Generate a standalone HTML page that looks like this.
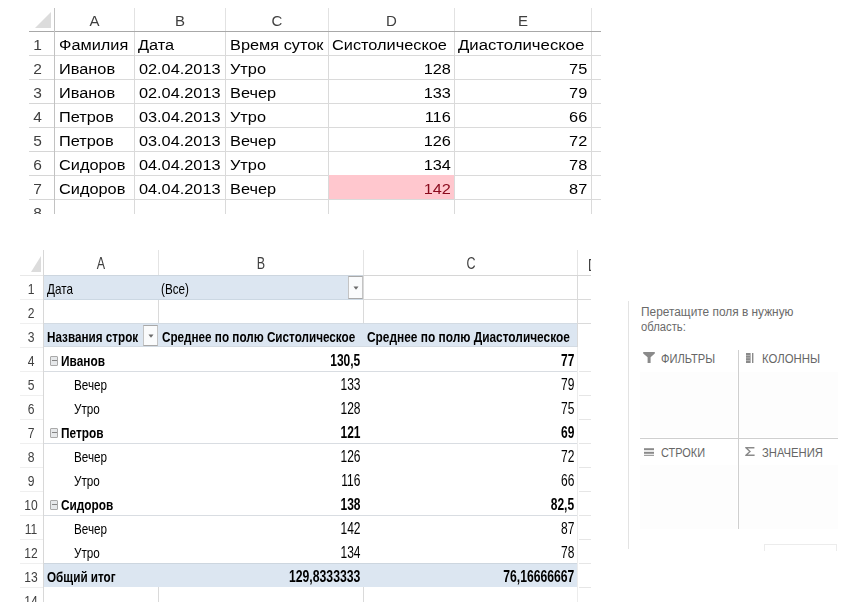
<!DOCTYPE html><html><head><meta charset="utf-8"><style>html,body{margin:0;padding:0;background:#fff;width:854px;height:602px;overflow:hidden;position:relative;font-family:"Liberation Sans", sans-serif}</style></head><body><div style="position:absolute;left:0;top:0;width:854px;height:602px;background:#fff;filter:blur(0.5px)">
<div style="position:absolute;left:134px;top:8px;width:1px;height:23px;background:#e2e2e2"></div>
<div style="position:absolute;left:134px;top:31px;width:1px;height:183px;background:#dadada"></div>
<div style="position:absolute;left:225px;top:8px;width:1px;height:23px;background:#e2e2e2"></div>
<div style="position:absolute;left:225px;top:31px;width:1px;height:183px;background:#dadada"></div>
<div style="position:absolute;left:328px;top:8px;width:1px;height:23px;background:#e2e2e2"></div>
<div style="position:absolute;left:328px;top:31px;width:1px;height:183px;background:#dadada"></div>
<div style="position:absolute;left:454px;top:8px;width:1px;height:23px;background:#e2e2e2"></div>
<div style="position:absolute;left:454px;top:31px;width:1px;height:183px;background:#dadada"></div>
<div style="position:absolute;left:591px;top:8px;width:1px;height:23px;background:#e2e2e2"></div>
<div style="position:absolute;left:591px;top:31px;width:1px;height:183px;background:#dadada"></div>
<div style="position:absolute;left:29px;top:55px;width:25px;height:1px;background:#d6d6d6"></div>
<div style="position:absolute;left:54px;top:55px;width:547px;height:1px;background:#dadada"></div>
<div style="position:absolute;left:29px;top:79px;width:25px;height:1px;background:#d6d6d6"></div>
<div style="position:absolute;left:54px;top:79px;width:547px;height:1px;background:#dadada"></div>
<div style="position:absolute;left:29px;top:103px;width:25px;height:1px;background:#d6d6d6"></div>
<div style="position:absolute;left:54px;top:103px;width:547px;height:1px;background:#dadada"></div>
<div style="position:absolute;left:29px;top:127px;width:25px;height:1px;background:#d6d6d6"></div>
<div style="position:absolute;left:54px;top:127px;width:547px;height:1px;background:#dadada"></div>
<div style="position:absolute;left:29px;top:151px;width:25px;height:1px;background:#d6d6d6"></div>
<div style="position:absolute;left:54px;top:151px;width:547px;height:1px;background:#dadada"></div>
<div style="position:absolute;left:29px;top:175px;width:25px;height:1px;background:#d6d6d6"></div>
<div style="position:absolute;left:54px;top:175px;width:547px;height:1px;background:#dadada"></div>
<div style="position:absolute;left:29px;top:199px;width:25px;height:1px;background:#d6d6d6"></div>
<div style="position:absolute;left:54px;top:199px;width:547px;height:1px;background:#dadada"></div>
<div style="position:absolute;left:329px;top:175px;width:125px;height:24px;background:#ffc7ce;"></div>
<div style="position:absolute;left:29px;top:31px;width:572px;height:1px;background:#a8a8a8"></div>
<div style="position:absolute;left:54px;top:8px;width:1px;height:206px;background:#c2c2c2"></div>
<svg style="position:absolute;left:33px;top:10px" width="20" height="20"><polygon points="18,2 18,18 2,18" fill="#dcdcdc"/></svg>
<div style="position:absolute;left:-105.5px;width:400px;text-align:center;top:12.70px;font-size:15px;line-height:15px;font-weight:normal;color:#3f3f3f;white-space:pre;transform:scaleX(1.0);transform-origin:center 0;">A</div>
<div style="position:absolute;left:-20.0px;width:400px;text-align:center;top:12.70px;font-size:15px;line-height:15px;font-weight:normal;color:#3f3f3f;white-space:pre;transform:scaleX(1.0);transform-origin:center 0;">B</div>
<div style="position:absolute;left:77.0px;width:400px;text-align:center;top:12.70px;font-size:15px;line-height:15px;font-weight:normal;color:#3f3f3f;white-space:pre;transform:scaleX(1.0);transform-origin:center 0;">C</div>
<div style="position:absolute;left:191.5px;width:400px;text-align:center;top:12.70px;font-size:15px;line-height:15px;font-weight:normal;color:#3f3f3f;white-space:pre;transform:scaleX(1.0);transform-origin:center 0;">D</div>
<div style="position:absolute;left:323.0px;width:400px;text-align:center;top:12.70px;font-size:15px;line-height:15px;font-weight:normal;color:#3f3f3f;white-space:pre;transform:scaleX(1.0);transform-origin:center 0;">E</div>
<div style="position:absolute;left:-162.4px;width:400px;text-align:center;top:37.08px;font-size:15.5px;line-height:15.5px;font-weight:normal;color:#3f3f3f;white-space:pre;transform:scaleX(1.0);transform-origin:center 0;">1</div>
<div style="position:absolute;left:-162.4px;width:400px;text-align:center;top:61.08px;font-size:15.5px;line-height:15.5px;font-weight:normal;color:#3f3f3f;white-space:pre;transform:scaleX(1.0);transform-origin:center 0;">2</div>
<div style="position:absolute;left:-162.4px;width:400px;text-align:center;top:85.08px;font-size:15.5px;line-height:15.5px;font-weight:normal;color:#3f3f3f;white-space:pre;transform:scaleX(1.0);transform-origin:center 0;">3</div>
<div style="position:absolute;left:-162.4px;width:400px;text-align:center;top:109.08px;font-size:15.5px;line-height:15.5px;font-weight:normal;color:#3f3f3f;white-space:pre;transform:scaleX(1.0);transform-origin:center 0;">4</div>
<div style="position:absolute;left:-162.4px;width:400px;text-align:center;top:133.08px;font-size:15.5px;line-height:15.5px;font-weight:normal;color:#3f3f3f;white-space:pre;transform:scaleX(1.0);transform-origin:center 0;">5</div>
<div style="position:absolute;left:-162.4px;width:400px;text-align:center;top:157.08px;font-size:15.5px;line-height:15.5px;font-weight:normal;color:#3f3f3f;white-space:pre;transform:scaleX(1.0);transform-origin:center 0;">6</div>
<div style="position:absolute;left:-162.4px;width:400px;text-align:center;top:181.08px;font-size:15.5px;line-height:15.5px;font-weight:normal;color:#3f3f3f;white-space:pre;transform:scaleX(1.0);transform-origin:center 0;">7</div>
<div style="position:absolute;left:-162.4px;width:400px;text-align:center;top:205.08px;font-size:15.5px;line-height:15.5px;font-weight:normal;color:#3f3f3f;white-space:pre;transform:scaleX(1.0);transform-origin:center 0;">8</div>
<div style="position:absolute;left:58.8px;top:36.98px;font-size:15.5px;line-height:15.5px;font-weight:normal;color:#000;white-space:pre;transform:scaleX(1.053);transform-origin:left 0;">Фамилия</div>
<div style="position:absolute;left:138.2px;top:36.98px;font-size:15.5px;line-height:15.5px;font-weight:normal;color:#000;white-space:pre;transform:scaleX(1.053);transform-origin:left 0;">Дата</div>
<div style="position:absolute;left:230px;top:36.98px;font-size:15.5px;line-height:15.5px;font-weight:normal;color:#000;white-space:pre;transform:scaleX(1.053);transform-origin:left 0;">Время суток</div>
<div style="position:absolute;left:332px;top:36.98px;font-size:15.5px;line-height:15.5px;font-weight:normal;color:#000;white-space:pre;transform:scaleX(1.053);transform-origin:left 0;">Систолическое</div>
<div style="position:absolute;left:458.4px;top:36.98px;font-size:15.5px;line-height:15.5px;font-weight:normal;color:#000;white-space:pre;transform:scaleX(1.0793249999999999);transform-origin:left 0;">Диастолическое</div>
<div style="position:absolute;left:58.8px;top:60.98px;font-size:15.5px;line-height:15.5px;font-weight:normal;color:#000;white-space:pre;transform:scaleX(1.053);transform-origin:left 0;">Иванов</div>
<div style="position:absolute;right:633px;top:60.98px;font-size:15.5px;line-height:15.5px;font-weight:normal;color:#000;white-space:pre;transform:scaleX(1.053);transform-origin:right 0;">02.04.2013</div>
<div style="position:absolute;left:229.5px;top:60.98px;font-size:15.5px;line-height:15.5px;font-weight:normal;color:#000;white-space:pre;transform:scaleX(1.053);transform-origin:left 0;">Утро</div>
<div style="position:absolute;right:403.5px;top:60.98px;font-size:15.5px;line-height:15.5px;font-weight:normal;color:#000;white-space:pre;transform:scaleX(1.053);transform-origin:right 0;">128</div>
<div style="position:absolute;right:266.5px;top:60.98px;font-size:15.5px;line-height:15.5px;font-weight:normal;color:#000;white-space:pre;transform:scaleX(1.053);transform-origin:right 0;">75</div>
<div style="position:absolute;left:58.8px;top:84.98px;font-size:15.5px;line-height:15.5px;font-weight:normal;color:#000;white-space:pre;transform:scaleX(1.053);transform-origin:left 0;">Иванов</div>
<div style="position:absolute;right:633px;top:84.98px;font-size:15.5px;line-height:15.5px;font-weight:normal;color:#000;white-space:pre;transform:scaleX(1.053);transform-origin:right 0;">02.04.2013</div>
<div style="position:absolute;left:229.5px;top:84.98px;font-size:15.5px;line-height:15.5px;font-weight:normal;color:#000;white-space:pre;transform:scaleX(1.053);transform-origin:left 0;">Вечер</div>
<div style="position:absolute;right:403.5px;top:84.98px;font-size:15.5px;line-height:15.5px;font-weight:normal;color:#000;white-space:pre;transform:scaleX(1.053);transform-origin:right 0;">133</div>
<div style="position:absolute;right:266.5px;top:84.98px;font-size:15.5px;line-height:15.5px;font-weight:normal;color:#000;white-space:pre;transform:scaleX(1.053);transform-origin:right 0;">79</div>
<div style="position:absolute;left:58.8px;top:108.98px;font-size:15.5px;line-height:15.5px;font-weight:normal;color:#000;white-space:pre;transform:scaleX(1.053);transform-origin:left 0;">Петров</div>
<div style="position:absolute;right:633px;top:108.98px;font-size:15.5px;line-height:15.5px;font-weight:normal;color:#000;white-space:pre;transform:scaleX(1.053);transform-origin:right 0;">03.04.2013</div>
<div style="position:absolute;left:229.5px;top:108.98px;font-size:15.5px;line-height:15.5px;font-weight:normal;color:#000;white-space:pre;transform:scaleX(1.053);transform-origin:left 0;">Утро</div>
<div style="position:absolute;right:403.5px;top:108.98px;font-size:15.5px;line-height:15.5px;font-weight:normal;color:#000;white-space:pre;transform:scaleX(1.053);transform-origin:right 0;">116</div>
<div style="position:absolute;right:266.5px;top:108.98px;font-size:15.5px;line-height:15.5px;font-weight:normal;color:#000;white-space:pre;transform:scaleX(1.053);transform-origin:right 0;">66</div>
<div style="position:absolute;left:58.8px;top:132.98px;font-size:15.5px;line-height:15.5px;font-weight:normal;color:#000;white-space:pre;transform:scaleX(1.053);transform-origin:left 0;">Петров</div>
<div style="position:absolute;right:633px;top:132.98px;font-size:15.5px;line-height:15.5px;font-weight:normal;color:#000;white-space:pre;transform:scaleX(1.053);transform-origin:right 0;">03.04.2013</div>
<div style="position:absolute;left:229.5px;top:132.98px;font-size:15.5px;line-height:15.5px;font-weight:normal;color:#000;white-space:pre;transform:scaleX(1.053);transform-origin:left 0;">Вечер</div>
<div style="position:absolute;right:403.5px;top:132.98px;font-size:15.5px;line-height:15.5px;font-weight:normal;color:#000;white-space:pre;transform:scaleX(1.053);transform-origin:right 0;">126</div>
<div style="position:absolute;right:266.5px;top:132.98px;font-size:15.5px;line-height:15.5px;font-weight:normal;color:#000;white-space:pre;transform:scaleX(1.053);transform-origin:right 0;">72</div>
<div style="position:absolute;left:58.8px;top:156.98px;font-size:15.5px;line-height:15.5px;font-weight:normal;color:#000;white-space:pre;transform:scaleX(1.053);transform-origin:left 0;">Сидоров</div>
<div style="position:absolute;right:633px;top:156.98px;font-size:15.5px;line-height:15.5px;font-weight:normal;color:#000;white-space:pre;transform:scaleX(1.053);transform-origin:right 0;">04.04.2013</div>
<div style="position:absolute;left:229.5px;top:156.98px;font-size:15.5px;line-height:15.5px;font-weight:normal;color:#000;white-space:pre;transform:scaleX(1.053);transform-origin:left 0;">Утро</div>
<div style="position:absolute;right:403.5px;top:156.98px;font-size:15.5px;line-height:15.5px;font-weight:normal;color:#000;white-space:pre;transform:scaleX(1.053);transform-origin:right 0;">134</div>
<div style="position:absolute;right:266.5px;top:156.98px;font-size:15.5px;line-height:15.5px;font-weight:normal;color:#000;white-space:pre;transform:scaleX(1.053);transform-origin:right 0;">78</div>
<div style="position:absolute;left:58.8px;top:180.98px;font-size:15.5px;line-height:15.5px;font-weight:normal;color:#000;white-space:pre;transform:scaleX(1.053);transform-origin:left 0;">Сидоров</div>
<div style="position:absolute;right:633px;top:180.98px;font-size:15.5px;line-height:15.5px;font-weight:normal;color:#000;white-space:pre;transform:scaleX(1.053);transform-origin:right 0;">04.04.2013</div>
<div style="position:absolute;left:229.5px;top:180.98px;font-size:15.5px;line-height:15.5px;font-weight:normal;color:#000;white-space:pre;transform:scaleX(1.053);transform-origin:left 0;">Вечер</div>
<div style="position:absolute;right:403.5px;top:180.98px;font-size:15.5px;line-height:15.5px;font-weight:normal;color:#8a0a1c;white-space:pre;transform:scaleX(1.053);transform-origin:right 0;">142</div>
<div style="position:absolute;right:266.5px;top:180.98px;font-size:15.5px;line-height:15.5px;font-weight:normal;color:#000;white-space:pre;transform:scaleX(1.053);transform-origin:right 0;">87</div>
<div style="position:absolute;left:0px;top:214px;width:854px;height:36px;background:#fff;"></div>
<div style="position:absolute;left:158px;top:250px;width:1px;height:25px;background:#e4e4e4"></div>
<div style="position:absolute;left:363px;top:250px;width:1px;height:25px;background:#e4e4e4"></div>
<div style="position:absolute;left:577px;top:250px;width:1px;height:25px;background:#e4e4e4"></div>
<div style="position:absolute;left:20px;top:299px;width:23px;height:1px;background:#efefef"></div>
<div style="position:absolute;left:20px;top:323px;width:23px;height:1px;background:#efefef"></div>
<div style="position:absolute;left:20px;top:347px;width:23px;height:1px;background:#efefef"></div>
<div style="position:absolute;left:20px;top:371px;width:23px;height:1px;background:#efefef"></div>
<div style="position:absolute;left:20px;top:395px;width:23px;height:1px;background:#efefef"></div>
<div style="position:absolute;left:20px;top:419px;width:23px;height:1px;background:#efefef"></div>
<div style="position:absolute;left:20px;top:443px;width:23px;height:1px;background:#efefef"></div>
<div style="position:absolute;left:20px;top:467px;width:23px;height:1px;background:#efefef"></div>
<div style="position:absolute;left:20px;top:491px;width:23px;height:1px;background:#efefef"></div>
<div style="position:absolute;left:20px;top:515px;width:23px;height:1px;background:#efefef"></div>
<div style="position:absolute;left:20px;top:539px;width:23px;height:1px;background:#efefef"></div>
<div style="position:absolute;left:20px;top:563px;width:23px;height:1px;background:#efefef"></div>
<div style="position:absolute;left:20px;top:587px;width:23px;height:1px;background:#efefef"></div>
<div style="position:absolute;left:158px;top:275px;width:1px;height:48px;background:#dadada"></div>
<div style="position:absolute;left:363px;top:299px;width:228px;height:1px;background:#dadada"></div>
<div style="position:absolute;left:43px;top:299px;width:320px;height:1px;background:#ccd8e3"></div>
<div style="position:absolute;left:363px;top:275px;width:228px;height:1px;background:#dadada"></div>
<div style="position:absolute;left:43px;top:323px;width:548px;height:1px;background:#dadada"></div>
<div style="position:absolute;left:363px;top:275px;width:1px;height:48px;background:#dadada"></div>
<div style="position:absolute;left:577px;top:275px;width:1px;height:72px;background:#dadada"></div>
<div style="position:absolute;left:577px;top:347px;width:1px;height:255px;background:#ececec"></div>
<div style="position:absolute;left:579px;top:371px;width:12px;height:1px;background:#e6e6e6"></div>
<div style="position:absolute;left:579px;top:395px;width:12px;height:1px;background:#e6e6e6"></div>
<div style="position:absolute;left:579px;top:419px;width:12px;height:1px;background:#e6e6e6"></div>
<div style="position:absolute;left:579px;top:443px;width:12px;height:1px;background:#e6e6e6"></div>
<div style="position:absolute;left:579px;top:467px;width:12px;height:1px;background:#e6e6e6"></div>
<div style="position:absolute;left:579px;top:491px;width:12px;height:1px;background:#e6e6e6"></div>
<div style="position:absolute;left:579px;top:515px;width:12px;height:1px;background:#e6e6e6"></div>
<div style="position:absolute;left:579px;top:539px;width:12px;height:1px;background:#e6e6e6"></div>
<div style="position:absolute;left:579px;top:563px;width:12px;height:1px;background:#e6e6e6"></div>
<div style="position:absolute;left:579px;top:587px;width:12px;height:1px;background:#e6e6e6"></div>
<div style="position:absolute;left:579px;top:587px;width:12px;height:1px;background:#e6e6e6"></div>
<div style="position:absolute;left:158px;top:587px;width:1px;height:15px;background:#dadada"></div>
<div style="position:absolute;left:363px;top:587px;width:1px;height:15px;background:#dadada"></div>
<div style="position:absolute;left:43px;top:275px;width:320px;height:24px;background:#dce6f1;border-top:1px solid #cdd6df;box-sizing:border-box"></div>
<div style="position:absolute;left:43px;top:323px;width:534px;height:24px;background:#dce6f1;border-top:1px solid #d3dbe3;border-bottom:1px solid #d3dbe3;box-sizing:border-box"></div>
<div style="position:absolute;left:43px;top:563px;width:534px;height:24px;background:#dce6f1;border-top:1px solid #cdd6df;box-sizing:border-box"></div>
<div style="position:absolute;left:43px;top:371px;width:534px;height:1px;background:#d9dde2"></div>
<div style="position:absolute;left:43px;top:443px;width:534px;height:1px;background:#d9dde2"></div>
<div style="position:absolute;left:43px;top:515px;width:534px;height:1px;background:#d9dde2"></div>
<div style="position:absolute;left:20px;top:275px;width:23px;height:1px;background:#e8e8e8"></div>
<div style="position:absolute;left:363px;top:275px;width:228px;height:1px;background:#d6d6d6"></div>
<div style="position:absolute;left:43px;top:250px;width:1px;height:352px;background:#d8d8d8"></div>
<svg style="position:absolute;left:29px;top:254px" width="14" height="20"><polygon points="12,2 12,18 2,18" fill="#dcdcdc"/></svg>
<div style="position:absolute;left:348px;top:276px;width:15px;height:23px;box-sizing:border-box;border:1px solid #c4c4c4;border-top-color:#a8a8a8;border-bottom-color:#a8a8a8;background:#fafbfc"></div>
<svg style="position:absolute;left:351.5px;top:284.5px" width="8" height="6"><polygon points="1.5,1.5 6.5,1.5 4,4.8" fill="#6a6a6a"/></svg>
<div style="position:absolute;left:143px;top:325px;width:15px;height:21px;box-sizing:border-box;border:1px solid #c4c4c4;border-top-color:#a8a8a8;border-bottom-color:#a8a8a8;background:#fafbfc"></div>
<svg style="position:absolute;left:146.5px;top:332.5px" width="8" height="6"><polygon points="1.5,1.5 6.5,1.5 4,4.8" fill="#6a6a6a"/></svg>
<div style="position:absolute;left:-99.0px;width:400px;text-align:center;top:256.46px;font-size:16px;line-height:16px;font-weight:normal;color:#3f3f3f;white-space:pre;transform:scaleX(0.78);transform-origin:center 0;">A</div>
<div style="position:absolute;left:61.0px;width:400px;text-align:center;top:256.46px;font-size:16px;line-height:16px;font-weight:normal;color:#3f3f3f;white-space:pre;transform:scaleX(0.78);transform-origin:center 0;">B</div>
<div style="position:absolute;left:270.5px;width:400px;text-align:center;top:256.46px;font-size:16px;line-height:16px;font-weight:normal;color:#3f3f3f;white-space:pre;transform:scaleX(0.78);transform-origin:center 0;">C</div>
<div style="position:absolute;left:578px;top:250px;width:13px;height:25px;overflow:hidden">
<div style="position:absolute;left:9.5px;top:7.5px;font-size:16px;line-height:16px;color:#3f3f3f;transform:scaleX(0.78);transform-origin:left 0">D</div>
</div>
<div style="position:absolute;left:-169px;width:400px;text-align:center;top:280.88px;font-size:15.5px;line-height:15.5px;font-weight:normal;color:#3f3f3f;white-space:pre;transform:scaleX(0.78);transform-origin:center 0;">1</div>
<div style="position:absolute;left:-169px;width:400px;text-align:center;top:304.88px;font-size:15.5px;line-height:15.5px;font-weight:normal;color:#3f3f3f;white-space:pre;transform:scaleX(0.78);transform-origin:center 0;">2</div>
<div style="position:absolute;left:-169px;width:400px;text-align:center;top:328.88px;font-size:15.5px;line-height:15.5px;font-weight:normal;color:#3f3f3f;white-space:pre;transform:scaleX(0.78);transform-origin:center 0;">3</div>
<div style="position:absolute;left:-169px;width:400px;text-align:center;top:352.88px;font-size:15.5px;line-height:15.5px;font-weight:normal;color:#3f3f3f;white-space:pre;transform:scaleX(0.78);transform-origin:center 0;">4</div>
<div style="position:absolute;left:-169px;width:400px;text-align:center;top:376.88px;font-size:15.5px;line-height:15.5px;font-weight:normal;color:#3f3f3f;white-space:pre;transform:scaleX(0.78);transform-origin:center 0;">5</div>
<div style="position:absolute;left:-169px;width:400px;text-align:center;top:400.88px;font-size:15.5px;line-height:15.5px;font-weight:normal;color:#3f3f3f;white-space:pre;transform:scaleX(0.78);transform-origin:center 0;">6</div>
<div style="position:absolute;left:-169px;width:400px;text-align:center;top:424.88px;font-size:15.5px;line-height:15.5px;font-weight:normal;color:#3f3f3f;white-space:pre;transform:scaleX(0.78);transform-origin:center 0;">7</div>
<div style="position:absolute;left:-169px;width:400px;text-align:center;top:448.88px;font-size:15.5px;line-height:15.5px;font-weight:normal;color:#3f3f3f;white-space:pre;transform:scaleX(0.78);transform-origin:center 0;">8</div>
<div style="position:absolute;left:-169px;width:400px;text-align:center;top:472.88px;font-size:15.5px;line-height:15.5px;font-weight:normal;color:#3f3f3f;white-space:pre;transform:scaleX(0.78);transform-origin:center 0;">9</div>
<div style="position:absolute;left:-169px;width:400px;text-align:center;top:496.88px;font-size:15.5px;line-height:15.5px;font-weight:normal;color:#3f3f3f;white-space:pre;transform:scaleX(0.78);transform-origin:center 0;">10</div>
<div style="position:absolute;left:-169px;width:400px;text-align:center;top:520.88px;font-size:15.5px;line-height:15.5px;font-weight:normal;color:#3f3f3f;white-space:pre;transform:scaleX(0.78);transform-origin:center 0;">11</div>
<div style="position:absolute;left:-169px;width:400px;text-align:center;top:544.88px;font-size:15.5px;line-height:15.5px;font-weight:normal;color:#3f3f3f;white-space:pre;transform:scaleX(0.78);transform-origin:center 0;">12</div>
<div style="position:absolute;left:-169px;width:400px;text-align:center;top:568.88px;font-size:15.5px;line-height:15.5px;font-weight:normal;color:#3f3f3f;white-space:pre;transform:scaleX(0.78);transform-origin:center 0;">13</div>
<div style="position:absolute;left:-169px;width:400px;text-align:center;top:592.88px;font-size:15.5px;line-height:15.5px;font-weight:normal;color:#3f3f3f;white-space:pre;transform:scaleX(0.78);transform-origin:center 0;">14</div>
<div style="position:absolute;left:46.5px;top:280.80px;font-size:15px;line-height:15px;font-weight:normal;color:#000;white-space:pre;transform:scaleX(0.78);transform-origin:left 0;">Дата</div>
<div style="position:absolute;left:160.5px;top:280.80px;font-size:15px;line-height:15px;font-weight:normal;color:#000;white-space:pre;transform:scaleX(0.78);transform-origin:left 0;">(Все)</div>
<div style="position:absolute;left:47px;top:328.80px;font-size:15px;line-height:15px;font-weight:bold;color:#000;white-space:pre;transform:scaleX(0.78);transform-origin:left 0;">Названия строк</div>
<div style="position:absolute;left:162.2px;top:328.80px;font-size:15px;line-height:15px;font-weight:bold;color:#000;white-space:pre;transform:scaleX(0.78);transform-origin:left 0;">Среднее по полю Систолическое</div>
<div style="position:absolute;left:366.7px;top:328.80px;font-size:15px;line-height:15px;font-weight:bold;color:#000;white-space:pre;transform:scaleX(0.793);transform-origin:left 0;">Среднее по полю Диастолическое</div>
<div style="position:absolute;left:50px;top:356px;width:8px;height:10px;box-sizing:border-box;border:1px solid #a9a9a9;border-radius:1px;background:#e6e8ea"></div>
<div style="position:absolute;left:51.5px;top:359.6px;width:5px;height:1.2px;background:#858585"></div>
<div style="position:absolute;left:60.6px;top:352.80px;font-size:15px;line-height:15px;font-weight:bold;color:#000;white-space:pre;transform:scaleX(0.79);transform-origin:left 0;">Иванов</div>
<div style="position:absolute;right:493.3px;top:351.53px;font-size:16.5px;line-height:16.5px;font-weight:bold;color:#000;white-space:pre;transform:scaleX(0.7272727272727273);transform-origin:right 0;">130,5</div>
<div style="position:absolute;right:279.4px;top:351.53px;font-size:16.5px;line-height:16.5px;font-weight:bold;color:#000;white-space:pre;transform:scaleX(0.7272727272727273);transform-origin:right 0;">77</div>
<div style="position:absolute;left:74px;top:376.80px;font-size:15px;line-height:15px;font-weight:normal;color:#000;white-space:pre;transform:scaleX(0.78);transform-origin:left 0;">Вечер</div>
<div style="position:absolute;right:493.3px;top:375.53px;font-size:16.5px;line-height:16.5px;font-weight:normal;color:#000;white-space:pre;transform:scaleX(0.7272727272727273);transform-origin:right 0;">133</div>
<div style="position:absolute;right:279.4px;top:375.53px;font-size:16.5px;line-height:16.5px;font-weight:normal;color:#000;white-space:pre;transform:scaleX(0.7272727272727273);transform-origin:right 0;">79</div>
<div style="position:absolute;left:74px;top:400.80px;font-size:15px;line-height:15px;font-weight:normal;color:#000;white-space:pre;transform:scaleX(0.78);transform-origin:left 0;">Утро</div>
<div style="position:absolute;right:493.3px;top:399.53px;font-size:16.5px;line-height:16.5px;font-weight:normal;color:#000;white-space:pre;transform:scaleX(0.7272727272727273);transform-origin:right 0;">128</div>
<div style="position:absolute;right:279.4px;top:399.53px;font-size:16.5px;line-height:16.5px;font-weight:normal;color:#000;white-space:pre;transform:scaleX(0.7272727272727273);transform-origin:right 0;">75</div>
<div style="position:absolute;left:50px;top:428px;width:8px;height:10px;box-sizing:border-box;border:1px solid #a9a9a9;border-radius:1px;background:#e6e8ea"></div>
<div style="position:absolute;left:51.5px;top:431.6px;width:5px;height:1.2px;background:#858585"></div>
<div style="position:absolute;left:60.6px;top:424.80px;font-size:15px;line-height:15px;font-weight:bold;color:#000;white-space:pre;transform:scaleX(0.79);transform-origin:left 0;">Петров</div>
<div style="position:absolute;right:493.3px;top:423.53px;font-size:16.5px;line-height:16.5px;font-weight:bold;color:#000;white-space:pre;transform:scaleX(0.7272727272727273);transform-origin:right 0;">121</div>
<div style="position:absolute;right:279.4px;top:423.53px;font-size:16.5px;line-height:16.5px;font-weight:bold;color:#000;white-space:pre;transform:scaleX(0.7272727272727273);transform-origin:right 0;">69</div>
<div style="position:absolute;left:74px;top:448.80px;font-size:15px;line-height:15px;font-weight:normal;color:#000;white-space:pre;transform:scaleX(0.78);transform-origin:left 0;">Вечер</div>
<div style="position:absolute;right:493.3px;top:447.53px;font-size:16.5px;line-height:16.5px;font-weight:normal;color:#000;white-space:pre;transform:scaleX(0.7272727272727273);transform-origin:right 0;">126</div>
<div style="position:absolute;right:279.4px;top:447.53px;font-size:16.5px;line-height:16.5px;font-weight:normal;color:#000;white-space:pre;transform:scaleX(0.7272727272727273);transform-origin:right 0;">72</div>
<div style="position:absolute;left:74px;top:472.80px;font-size:15px;line-height:15px;font-weight:normal;color:#000;white-space:pre;transform:scaleX(0.78);transform-origin:left 0;">Утро</div>
<div style="position:absolute;right:493.3px;top:471.53px;font-size:16.5px;line-height:16.5px;font-weight:normal;color:#000;white-space:pre;transform:scaleX(0.7272727272727273);transform-origin:right 0;">116</div>
<div style="position:absolute;right:279.4px;top:471.53px;font-size:16.5px;line-height:16.5px;font-weight:normal;color:#000;white-space:pre;transform:scaleX(0.7272727272727273);transform-origin:right 0;">66</div>
<div style="position:absolute;left:50px;top:500px;width:8px;height:10px;box-sizing:border-box;border:1px solid #a9a9a9;border-radius:1px;background:#e6e8ea"></div>
<div style="position:absolute;left:51.5px;top:503.6px;width:5px;height:1.2px;background:#858585"></div>
<div style="position:absolute;left:60.6px;top:496.80px;font-size:15px;line-height:15px;font-weight:bold;color:#000;white-space:pre;transform:scaleX(0.79);transform-origin:left 0;">Сидоров</div>
<div style="position:absolute;right:493.3px;top:495.53px;font-size:16.5px;line-height:16.5px;font-weight:bold;color:#000;white-space:pre;transform:scaleX(0.7272727272727273);transform-origin:right 0;">138</div>
<div style="position:absolute;right:279.4px;top:495.53px;font-size:16.5px;line-height:16.5px;font-weight:bold;color:#000;white-space:pre;transform:scaleX(0.7272727272727273);transform-origin:right 0;">82,5</div>
<div style="position:absolute;left:74px;top:520.80px;font-size:15px;line-height:15px;font-weight:normal;color:#000;white-space:pre;transform:scaleX(0.78);transform-origin:left 0;">Вечер</div>
<div style="position:absolute;right:493.3px;top:519.53px;font-size:16.5px;line-height:16.5px;font-weight:normal;color:#000;white-space:pre;transform:scaleX(0.7272727272727273);transform-origin:right 0;">142</div>
<div style="position:absolute;right:279.4px;top:519.53px;font-size:16.5px;line-height:16.5px;font-weight:normal;color:#000;white-space:pre;transform:scaleX(0.7272727272727273);transform-origin:right 0;">87</div>
<div style="position:absolute;left:74px;top:544.80px;font-size:15px;line-height:15px;font-weight:normal;color:#000;white-space:pre;transform:scaleX(0.78);transform-origin:left 0;">Утро</div>
<div style="position:absolute;right:493.3px;top:543.53px;font-size:16.5px;line-height:16.5px;font-weight:normal;color:#000;white-space:pre;transform:scaleX(0.7272727272727273);transform-origin:right 0;">134</div>
<div style="position:absolute;right:279.4px;top:543.53px;font-size:16.5px;line-height:16.5px;font-weight:normal;color:#000;white-space:pre;transform:scaleX(0.7272727272727273);transform-origin:right 0;">78</div>
<div style="position:absolute;left:47px;top:568.80px;font-size:15px;line-height:15px;font-weight:bold;color:#000;white-space:pre;transform:scaleX(0.78);transform-origin:left 0;">Общий итог</div>
<div style="position:absolute;right:493.3px;top:567.53px;font-size:16.5px;line-height:16.5px;font-weight:bold;color:#000;white-space:pre;transform:scaleX(0.7409090909090909);transform-origin:right 0;">129,8333333</div>
<div style="position:absolute;right:279.4px;top:567.53px;font-size:16.5px;line-height:16.5px;font-weight:bold;color:#000;white-space:pre;transform:scaleX(0.7381818181818183);transform-origin:right 0;">76,16666667</div>
<div style="position:absolute;left:628px;top:301px;width:1px;height:248px;background:#e3e3e3"></div>
<div style="position:absolute;left:641px;top:306.12px;font-size:12.5px;line-height:12.5px;font-weight:normal;color:#6a6a6a;white-space:pre;transform:scaleX(0.9501557632398754);transform-origin:left 0;">Перетащите поля в нужную</div>
<div style="position:absolute;left:641px;top:321.42px;font-size:12.5px;line-height:12.5px;font-weight:normal;color:#6a6a6a;white-space:pre;transform:scaleX(0.900502512562814);transform-origin:left 0;">область:</div>
<div style="position:absolute;left:640px;top:372px;width:97px;height:65px;background:#fdfdfd;"></div>
<div style="position:absolute;left:739px;top:372px;width:99px;height:65px;background:#fdfdfd;"></div>
<div style="position:absolute;left:640px;top:465px;width:97px;height:64px;background:#fdfdfd;"></div>
<div style="position:absolute;left:739px;top:465px;width:99px;height:64px;background:#fdfdfd;"></div>
<div style="position:absolute;left:738px;top:350px;width:1px;height:179px;background:#cfcfcf"></div>
<div style="position:absolute;left:640px;top:438px;width:198px;height:1px;background:#cfcfcf"></div>
<div style="position:absolute;left:661px;top:353.12px;font-size:12.5px;line-height:12.5px;font-weight:normal;color:#666666;white-space:pre;transform:scaleX(0.8896210873146623);transform-origin:left 0;">ФИЛЬТРЫ</div>
<div style="position:absolute;left:762px;top:353.42px;font-size:12.5px;line-height:12.5px;font-weight:normal;color:#666666;white-space:pre;transform:scaleX(0.9090909090909092);transform-origin:left 0;">КОЛОННЫ</div>
<div style="position:absolute;left:661px;top:447.42px;font-size:12.5px;line-height:12.5px;font-weight:normal;color:#666666;white-space:pre;transform:scaleX(0.874751491053678);transform-origin:left 0;">СТРОКИ</div>
<div style="position:absolute;left:761.6px;top:447.42px;font-size:12.5px;line-height:12.5px;font-weight:normal;color:#666666;white-space:pre;transform:scaleX(0.9010339734121122);transform-origin:left 0;">ЗНАЧЕНИЯ</div>
<svg style="position:absolute;left:642px;top:351px" width="14" height="13"><path d="M1.2 1 H12.8 V2.6 L8.6 6.2 V12 H5.6 V6.2 L1.2 2.6 Z" fill="#8a8a8a"/></svg>
<svg style="position:absolute;left:745px;top:352px" width="10" height="12"><rect x="1" y="1" width="4.6" height="10" fill="#8a8a8a"/><rect x="1" y="3" width="4.6" height="0.8" fill="#bbb"/><rect x="1" y="5.5" width="4.6" height="0.8" fill="#bbb"/><rect x="1" y="8" width="4.6" height="0.8" fill="#bbb"/><rect x="7" y="1" width="1.4" height="10" fill="#8a8a8a"/></svg>
<svg style="position:absolute;left:643px;top:447px" width="12" height="10"><rect x="1" y="1.2" width="10" height="2" fill="#8a8a8a"/><rect x="1" y="4.8" width="10" height="2" fill="#8a8a8a"/><rect x="1" y="7.8" width="10" height="1" fill="#8a8a8a"/></svg>
<svg style="position:absolute;left:744px;top:446px" width="12" height="11"><path d="M1.2 1 H10.4 V2.4 H3.8 L7 5.5 L3.8 8.6 H10.6 V10 H1.2 V9 L5 5.5 L1.2 2 Z" fill="#8a8a8a"/></svg>
<div style="position:absolute;left:764px;top:544px;width:73px;height:20px;box-sizing:border-box;border:1px solid #ececec;border-bottom:none"></div>
<div style="position:absolute;left:629px;top:551px;width:225px;height:51px;background:#fff;"></div>
</div></body></html>
